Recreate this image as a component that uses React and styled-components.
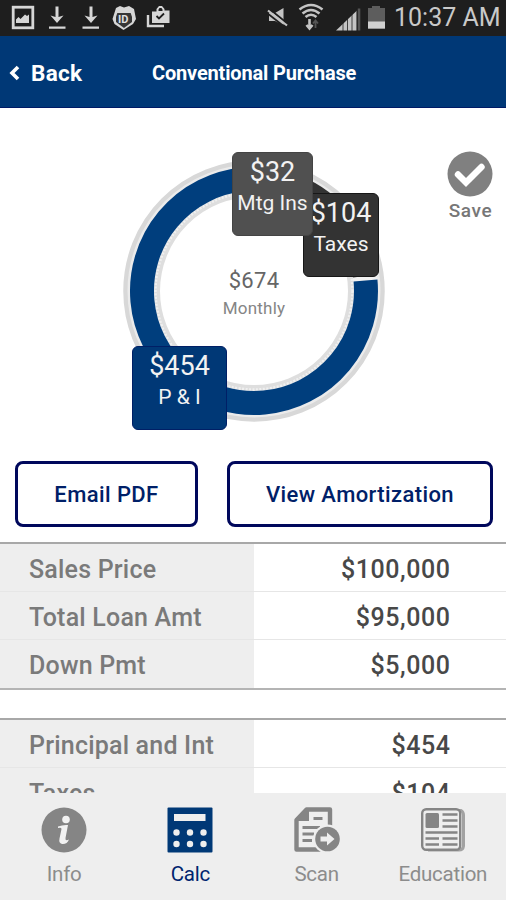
import React from 'react';
import styled, {createGlobalStyle} from "styled-components";

const NAVY = '#003876';
const GREY = '#858585';

const loanRows = [
    {label: 'Sales Price', value: '$100,000'},
    {label: 'Total Loan Amt', value: '$95,000'},
    {label: 'Down Pmt', value: '$5,000'},
];

const paymentRows = [
    {label: 'Principal and Int', value: '$454'},
    {label: 'Taxes', value: '$104'},
];

const tabs = [
    {title: 'Info', Icon: InfoIcon},
    {title: 'Calc', Icon: CalcIcon, active: true},
    {title: 'Scan', Icon: ScanIcon},
    {title: 'Education', Icon: NewsIcon},
];

function App() {
  return (
      <Screen>
          <GlobalStyle/>
          <StatusBar>
              <StatusIcons/>
              <Clock>10:37 AM</Clock>
          </StatusBar>
          <Header>
              <BackButton>
                  <svg width="12" height="16" viewBox="0 0 12 16">
                      <path d="M10 2 L4 8 L10 14" fill="none" stroke="#fff" strokeWidth="3.6"/>
                  </svg>
                  Back
              </BackButton>
              <Title>Conventional Purchase</Title>
          </Header>
          <ChartArea>
              <PaymentChart/>
              <SaveButton>
                  <svg width="46" height="46" viewBox="0 0 46 46">
                      <circle cx="23" cy="23" r="22.5" fill="#808080"/>
                      <path d="M11 23.5 L19 31.5 L34.5 16" fill="none" stroke="#fff" strokeWidth="6.4" strokeLinecap="round"/>
                  </svg>
                  Save
              </SaveButton>
          </ChartArea>
          <Actions>
              <ActionButton>Email PDF</ActionButton>
              <ActionButton>View Amortization</ActionButton>
          </Actions>
          <Details>
              <DetailTable rows={loanRows}/>
              <DetailTable rows={paymentRows}/>
          </Details>
          <TabBar>
              {
                  tabs.map( ({title, Icon, active}) => (
                      <Tab key={title} $active={active}>
                          <Icon/>
                          <span>{title}</span>
                      </Tab>
                  ))
              }
          </TabBar>
      </Screen>
  )
}

function StatusIcons() {
  return (
      <IconStrip width="385" height="36" viewBox="0 0 385 36">
          <g fill="none" stroke="#d6d6d6">
              <rect x="13.2" y="7.2" width="19.6" height="20.6" strokeWidth="2.8"/>
              <path d="M57 6.5 V21 M91 6.5 V21" strokeWidth="3"/>
              <path d="M49 27.6 H65.5 M82.5 27.6 H99" strokeWidth="2.2"/>
          </g>
          <g fill="#d6d6d6">
              <path d="M16 23 V19.5 L18.5 17 L20.5 19 L25 14.5 L27 16 L29 14.5 V23 Z"/>
              <path d="M50.5 15.5 L57 23 L63.5 15.5 L58.5 17 H55.5 Z"/>
              <path d="M84.5 15.5 L91 23 L97.5 15.5 L92.5 17 H89.5 Z"/>
              <path d="M116 8 L120 6 L124 7.5 L129 6 L134 9 L136 19 L133 24 L123.5 30 L114.5 24 L112.5 19 Z"/>
              <path fillRule="evenodd" d="M152 11.5 H156.5 V9 L159 6 H162 L164.5 9 V10.5 H169.5 V23 H152 Z M158.5 11 H162.5 V9.5 L161.5 8 H159.5 L158.5 9.5 Z"/>
          </g>
          <path d="M116 13 H132 V22 L124 28 L116 22 Z" fill="#363636"/>
          <path d="M115 18 L117 12 H131 L133 18" fill="none" stroke="#d6d6d6" strokeWidth="1.2"/>
          <IdText x="118" y="23">ID</IdText>
          <path d="M148 15 V26 H164" stroke="#d6d6d6" strokeWidth="2.4" fill="none"/>
          <path d="M156.5 16 L159 18.5 L164 13.5" stroke="#1e1e1e" strokeWidth="1.8" fill="none"/>
          <path d="M269 13 H275 L283.5 8 V25 L275 21 H269 Z" fill="#c4c4c4"/>
          <path d="M269.5 9 L288.5 24.500" stroke="#1e1e1e" strokeWidth="2"/>
          <path d="M268 10.5 L287 25.5" stroke="#c4c4c4" strokeWidth="2.2"/>
          <path d="M267 13 L285.5 27.500" stroke="#1e1e1e" strokeWidth="1.6"/>
          <g fill="none" stroke="#c4c4c4" strokeWidth="2.6">
              <path d="M299.5 9.5 Q311 0.5 322.5 9.5"/>
              <path d="M302.5 13.5 Q311 6.5 319.5 13.5"/>
              <path d="M305.5 17 Q311 12.5 316.5 17"/>
              <path d="M309.5 19 V28 M306.5 25 L309.5 28.5 L312.5 25"/>
              <path d="M315.5 28 V21 M313 23.5 L315.5 20.5 L318 23.5" stroke="#555" strokeWidth="1.8"/>
          </g>
          <path d="M336 30.5 L357 10.5 V30.5 Z" fill="#c4c4c4"/>
          <path d="M359 30.5 V8.5" stroke="#555" strokeWidth="2.6"/>
          <path d="M343 20 V31 M347.5 15 V31 M352 11 V31 M356.8 8 V31" stroke="#1e1e1e" strokeWidth="0.8"/>
          <path d="M368 8 H372 V6 H380 V8 H385 V29 H368 Z" fill="#5d5d5d"/>
          <path d="M368 21.5 H385 V28.5 H368 Z" fill="#d0d0d0"/>
      </IconStrip>
  )
}

function PaymentChart() {
  return (
      <Chart>
          <svg width="264" height="264" viewBox="-132 -132 264 264">
              <circle r="127.5" fill="none" stroke="#d8d8d8" strokeWidth="6.5"/>
              <circle r="125" fill="none" stroke="#ebebeb" strokeWidth="3"/>
              <circle r="97" fill="none" stroke="#dedede" strokeWidth="6"/>
              <circle r="98.5" fill="none" stroke="#f0f0f0" strokeWidth="2.5" strokeDasharray="2 1.5"/>
              <circle r="112" fill="none" stroke="#f1f1f1" strokeWidth="24"/>
              <path d="M111.5 -10.5 A112 112 0 1 1 -10 -111.6" fill="none" stroke="#003e7d" strokeWidth="24"/>
              <path d="M-10 -111.6 A112 112 0 0 1 33 -107" fill="none" stroke="#4d4d4d" strokeWidth="24"/>
              <path d="M33 -107 A112 112 0 0 1 111 -15" fill="none" stroke="#333" strokeWidth="24"/>
          </svg>
          <Total>
              <b>$674</b>
              <span>Monthly</span>
          </Total>
          <Callout $x={181} $y={34} $w={76} $color="#333" $edge="#171717">
              <b>$104</b>
              <span>Taxes</span>
          </Callout>
          <Callout $x={110} $y={-7} $w={81} $color="#505050" $edge="#444">
              <b>$32</b>
              <span>Mtg Ins</span>
          </Callout>
          <Callout $x={10} $y={187} $w={95} $color={NAVY} $edge="#001f66">
              <b>$454</b>
              <span>P &amp; I</span>
          </Callout>
      </Chart>
  )
}

function DetailTable({rows}) {
  return (
      <Table>
          {
              rows.map( row => (
                  <Row key={row.label}>
                      <Label>{row.label}</Label>
                      <Value>{row.value}</Value>
                  </Row>
              ))
          }
      </Table>
  )
}

function InfoIcon() {
  return (
      <svg width="46" height="46" viewBox="0 0 46 46">
          <circle cx="23" cy="23" r="22.5" fill={GREY}/>
          <circle cx="25" cy="12.5" r="3.8" fill="#f2f2f2"/>
          <path d="M17 19.5 Q22 17.5 27 18 L24.5 31 Q24 34.5 28 32.5 Q26 37.5 21 37 Q17.5 36 18.5 31.5 L20.5 22 Q20.5 20 17 21 Z" fill="#f2f2f2"/>
      </svg>
  )
}

function CalcIcon() {
  return (
      <svg width="46" height="46" viewBox="0 0 46 46">
          <rect x="0.5" y="0.5" width="45" height="45" rx="1" fill={NAVY}/>
          <rect x="7" y="7" width="31.5" height="7" fill="#eee"/>
          {[9.5, 23, 36.5].map(x => [25.5, 37].map(y => (
              <circle key={`${x}-${y}`} cx={x} cy={y} r="3.2" fill="#eee"/>
          )))}
      </svg>
  )
}

function ScanIcon() {
  return (
      <svg width="46" height="46" viewBox="0 0 46 46">
          <path d="M12.5 2.5 H36 V42.5 H2.5 V13 Z" fill="#eee" stroke={GREY} strokeWidth="4.4" strokeLinejoin="round"/>
          <path d="M1 13 L12.5 1.5 H15 V14 H1 Z" fill={GREY}/>
          <path d="M19.5 11.5 H28.5 M8.5 20.5 H26 M8.5 27 H20 M8.5 33.5 H18" stroke={GREY} strokeWidth="2.8"/>
          <circle cx="33.5" cy="32" r="14.5" fill="#eee"/>
          <circle cx="33.5" cy="32" r="12.3" fill={GREY}/>
          <path d="M26.5 29.5 H33 V25.5 L40.5 32 L33 38.5 V34.5 H26.5 Z" fill="#eee"/>
      </svg>
  )
}

function NewsIcon() {
  return (
      <svg width="46" height="46" viewBox="0 0 46 46">
          <path d="M38 3.5 H41 Q43.5 5 43.5 8 V39 Q43 43 39 43 H8" fill="none" stroke="#a2a2a2" strokeWidth="3"/>
          <rect x="2.2" y="2.2" width="38" height="40.5" rx="4" fill="#eee" stroke={GREY} strokeWidth="2.4"/>
          <rect x="5.5" y="6" width="13.5" height="15" rx="1.5" fill={GREY}/>
          <path d="M22.5 7.5 H37.5 M22.5 13.5 H37.5 M22.5 19.5 H37.5 M5.5 25.5 H37.5" stroke={GREY} strokeWidth="2.5"/>
          <path d="M5.5 31.5 H19 M22.5 31.5 H37.5 M5.5 37.5 H19 M22.5 37.5 H37.5" stroke={GREY} strokeWidth="2.5"/>
      </svg>
  )
}

const GlobalStyle = createGlobalStyle`
  * {
    box-sizing: border-box;
  }
  body {
    margin: 0;
    font-family: Roboto, sans-serif;
    background: #fff;
  }
  svg {
    display: block;
    flex: none;
  }
  button {
    font-family: inherit;
    background: none;
    border: 0;
    padding: 0;
  }
`;

const Screen = styled.div`
  display: flex;
  flex-direction: column;
  width: 506px;
  height: 900px;
  overflow: hidden;
`;

const StatusBar = styled.div`
  display: flex;
  align-items: center;
  flex: none;
  height: 36px;
  background: #1e1e1e;
`;

const IconStrip = styled.svg`
  margin-right: 9px;
`;

const IdText = styled.text`
  font-size: 11px;
  font-weight: 700;
  fill: #e0e0e0;
`;

const Clock = styled.span`
  font-size: 25px;
  line-height: 34px;
  color: #c9c9c9;
  white-space: nowrap;
`;

const Header = styled.div`
  display: grid;
  grid-template-columns: 152px 1fr;
  align-items: center;
  flex: none;
  height: 72px;
  padding-top: 2px;
  color: #fff;
  background: ${NAVY};
  border-bottom: 1px solid #001a66;
`;

const BackButton = styled.button`
  display: flex;
  align-items: center;
  gap: 11px;
  padding-left: 8px;
  font-size: 22.5px;
  font-weight: 700;
  letter-spacing: 0.3px;
  line-height: 30px;
  color: #fff;
`;

const Title = styled.div`
  font-size: 20px;
  font-weight: 700;
  letter-spacing: -0.17px;
  white-space: nowrap;
`;

const ChartArea = styled.div`
  display: flex;
  flex: none;
  height: 353px;
  padding: 51px 0 0 122px;
`;

const Chart = styled.div`
  position: relative;
  display: grid;
  place-items: center;
  width: 264px;
  height: 264px;
  > svg {
    grid-area: 1 / 1;
  }
`;

const Total = styled.div`
  grid-area: 1 / 1;
  display: flex;
  flex-direction: column;
  align-items: center;
  padding-top: 5px;
  color: #666;
  b {
    font-size: 22px;
    font-weight: 400;
    line-height: 28px;
    letter-spacing: 0.3px;
  }
  span {
    font-size: 17px;
    line-height: 26px;
    letter-spacing: 0.2px;
    color: #858585;
  }
`;

/* price tag that sits over a slice of the ring */
const Callout = styled.div`
  position: absolute;
  left: ${p => p.$x}px;
  top: ${p => p.$y}px;
  display: flex;
  flex-direction: column;
  align-items: center;
  width: ${p => p.$w}px;
  height: 84px;
  padding-top: 3px;
  color: #f2f2f2;
  white-space: nowrap;
  background: ${p => p.$color};
  border: 1px solid ${p => p.$edge};
  border-radius: 6px;
  b {
    font-size: 27px;
    font-weight: 400;
    line-height: 33px;
  }
  span {
    font-size: 21px;
    line-height: 28px;
  }
`;

const SaveButton = styled.button`
  display: flex;
  flex-direction: column;
  align-items: center;
  align-self: flex-start;
  gap: 1px;
  margin: -8px 0 0 61px;
  font-size: 19px;
  font-weight: 500;
  letter-spacing: 0.6px;
  text-indent: 1px;
  line-height: 26px;
  color: #777;
`;

const Actions = styled.div`
  display: grid;
  grid-template-columns: 183px 266px;
  gap: 29px;
  flex: none;
  height: 81px;
  padding: 0 0 15px 15px;
`;

const ActionButton = styled.button`
  font-size: 22px;
  font-weight: 500;
  letter-spacing: 0.4px;
  color: #002068;
  border: 3px solid #00085c;
  border-radius: 8px;
`;

const Details = styled.div`
  display: flex;
  flex-direction: column;
  gap: 28px;
  flex: 1;
  min-height: 0;
  overflow: hidden;
`;

const Table = styled.div`
  flex: none;
  border-top: 2px solid #a8a8a8;
  border-bottom: 2px solid #b4b4b4;
`;

const Row = styled.div`
  display: grid;
  grid-template-columns: 254px 1fr;
  height: 48px;
  font-size: 25px;
  font-weight: 500;
  line-height: 52px;
  white-space: nowrap;
  border-bottom: 1px solid #e6e6e6;
  overflow: hidden;
  &:last-child {
    border-bottom: 0;
  }
`;

const Label = styled.div`
  padding-left: 29px;
  letter-spacing: 0.2px;
  color: #7a7a7a;
  background: #eee;
`;

const Value = styled.div`
  padding-right: 55.5px;
  letter-spacing: 0.55px;
  text-align: right;
  color: #484848;
`;

const TabBar = styled.div`
  display: grid;
  grid-template-columns: repeat(4, 1fr);
  flex: none;
  height: 107px;
  padding: 14px 0 0 1px;
  background: #eee;
`;

const Tab = styled.div`
  display: flex;
  flex-direction: column;
  align-items: center;
  gap: 7px;
  font-size: 20.5px;
  letter-spacing: -0.25px;
  line-height: 28px;
  color: ${p => p.$active ? '#00246e' : '#8c8c8c'};
`;


export default App;
